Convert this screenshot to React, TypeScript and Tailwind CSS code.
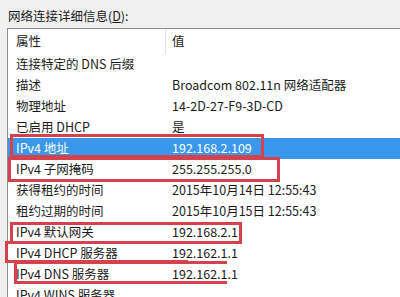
const rows: { name: string; value: string; selected?: boolean }[] = [
  { name: '连接特定的 DNS 后缀', value: '' },
  { name: '描述', value: 'Broadcom 802.11n 网络适配器' },
  { name: '物理地址', value: '14-2D-27-F9-3D-CD' },
  { name: '已启用 DHCP', value: '是' },
  { name: 'IPv4 地址', value: '192.168.2.109', selected: true },
  { name: 'IPv4 子网掩码', value: '255.255.255.0' },
  { name: '获得租约的时间', value: '2015年10月14日 12:55:43' },
  { name: '租约过期的时间', value: '2015年10月15日 12:55:43' },
  { name: 'IPv4 默认网关', value: '192.168.2.1' },
  { name: 'IPv4 DHCP 服务器', value: '192.162.1.1' },
  { name: 'IPv4 DNS 服务器', value: '192.162.1.1' },
  { name: 'IPv4 WINS 服务器', value: '' },
];

export default function App() {
  return (
    <div
      className="relative w-[400px] h-[297px] overflow-hidden bg-[#f0f0f0] text-[12.5px] text-[#1b1b1b]"
      style={{ fontFamily: '"Noto Sans CJK SC", "Noto Sans", sans-serif' }}
    >
      <div className="h-[28px] pl-[8px] pt-[7px] leading-[18px]">
        网络连接详细信息(<span className="underline">D</span>):
      </div>

      <div className="ml-[7px] border-l border-t border-[#8a8f96] bg-white">
        <div className="flex h-[25px] items-center">
          <div className="w-[157px] pl-[8px]">属性</div>
          <div className="h-[25px] w-px bg-[#e3e3e3]" />
          <div className="pl-[6px]">值</div>
        </div>
        {rows.map((r) => (
          <div
            key={r.name}
            className={`flex h-[21px] items-center whitespace-nowrap ${
              r.selected ? 'bg-[#3a98ec] text-white' : ''
            }`}
          >
            <div className="w-[158px] pl-[8px]">{r.name}</div>
            <div className="pl-[6px]">{r.value}</div>
          </div>
        ))}
      </div>

      {/* red annotation boxes drawn over the list */}
      <div className="absolute left-[10px] top-[134px] h-[24px] w-[254px] border-[3px] border-[#d4424e]" />
      <div className="absolute left-[8px] top-[157px] h-[25px] w-[272px] border-[3px] border-[#d4424e]" />
      <div className="absolute left-[10px] top-[222px] h-[22px] w-[232px] border-[3px] border-[#d4424e]" />
      <div className="absolute left-[5px] top-[241px] h-[22px] w-[183px] border-[3px] border-r-0 border-[#d4424e]" />
      <div className="absolute left-[14px] top-[261px] h-[23px] w-[213px] border-[3px] border-r-0 border-[#d4424e]" />
    </div>
  );
}
